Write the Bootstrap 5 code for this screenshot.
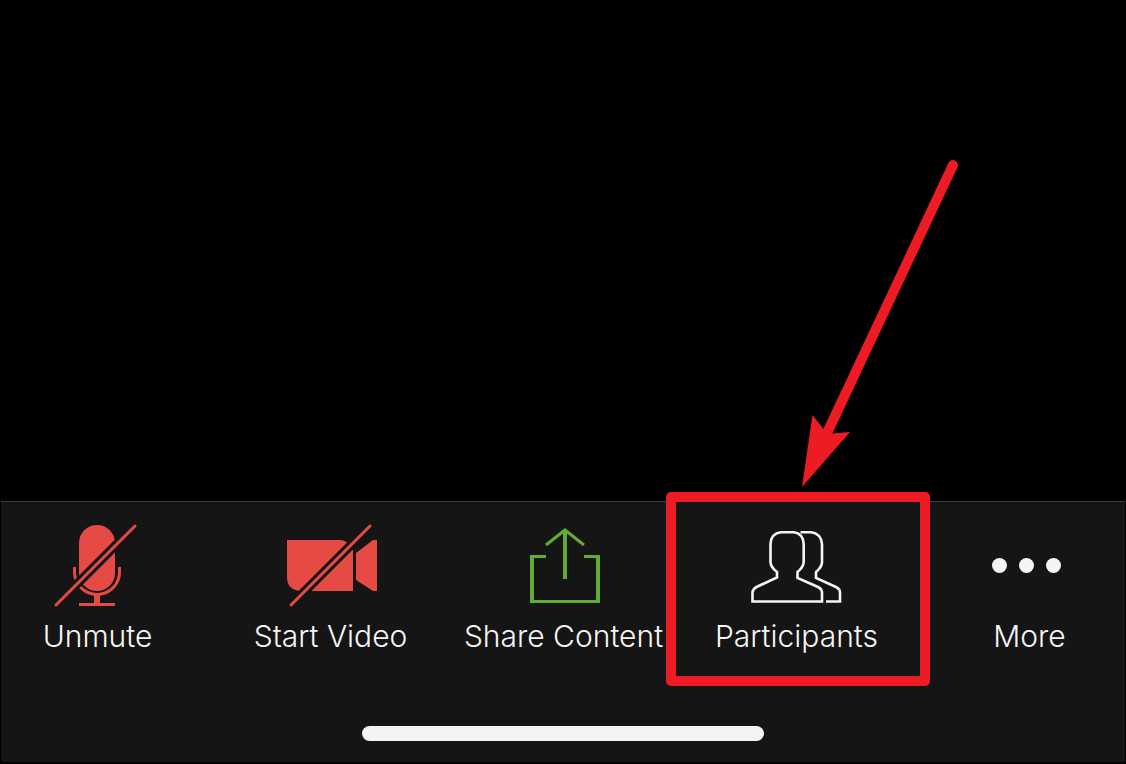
<!DOCTYPE html>
<html lang="en">
<head>
<meta charset="utf-8">
<meta name="viewport" content="width=device-width, initial-scale=1">
<title>Meeting controls</title>
<link href="https://cdn.jsdelivr.net/npm/bootstrap@5.3.0/dist/css/bootstrap.min.css" rel="stylesheet">
<style>
  body { background: #000; font-family: Inter, "Liberation Sans", sans-serif; overflow: hidden; }
  .meeting { padding: 0 1px 2px; }
  .toolbar { background: #151515; border-top: 1px solid #3c3c3c; padding: 18px 0 21px; }
  .controls { margin: 0 -21px 0 -20px; }
  .control { border: 0; background: none; color: #f5f5f5; padding: 0; font-size: 30px; font-weight: 300; line-height: 36px; white-space: nowrap; }
  .control svg { width: 96px; height: 90px; margin-bottom: 8px; }
  .off { color: #e54b44; }
  .share { color: #62ac30; }
  .cut { stroke: #151515; stroke-width: 9; }
  .highlight { border: 10px solid #ed1c24; border-radius: 5px; width: 264px; height: 194px; top: -28px; left: 50%; margin-left: -131px; pointer-events: none; }
  .pointer { bottom: 100%; left: 50%; margin-bottom: 18px; width: 170px; height: 352px; pointer-events: none; }
  .home-bar { width: 402px; height: 15px; background: #f4f4f4; margin-top: 72px; }
</style>
</head>
<body>
<div class="meeting d-flex flex-column min-vh-100">
  <main class="flex-grow-1"></main>
  <footer class="toolbar">
    <nav class="controls d-flex" aria-label="Meeting controls">
      <div class="col text-center">
        <button type="button" class="control d-inline-flex flex-column align-items-center">
          <svg class="off" viewBox="1 0 96 90" fill="none" stroke="currentColor" stroke-width="3" aria-hidden="true">
            <rect x="31" y="5" width="36" height="66" rx="18" fill="currentColor" stroke="none"/>
            <path d="M26.500 47V52A22.500 22.500 0 0 0 71.500 52V47"/>
            <path d="M46 75h6v8h15v3H31v-3h15z" fill="currentColor" stroke="none"/>
            <path class="cut" d="M12 81 87 6"/>
            <path d="M8 85 87 6" stroke-linecap="round"/>
          </svg>
          <span>Unmute</span>
        </button>
      </div>
      <div class="col text-center">
        <button type="button" class="control d-inline-flex flex-column align-items-center">
          <svg class="off" viewBox="-1 0 96 90" fill="none" stroke="currentColor" stroke-width="3" aria-hidden="true">
            <path d="M3 20H56Q63 20 69 29V71H15Q3 69 3 57ZM72 33 89 20H93V71H89L72 60Z" fill="currentColor" stroke="none"/>
            <path class="cut" d="M7 85 86 6"/>
            <path d="M7 85 86 6" stroke-linecap="round"/>
          </svg>
          <span>Start Video</span>
        </button>
      </div>
      <div class="col text-center">
        <button type="button" class="control d-inline-flex flex-column align-items-center">
          <svg class="share" viewBox="-1 0 96 90" fill="none" stroke="currentColor" aria-hidden="true">
            <path d="M13 36.500H29M67 36.500H83M13 81.500H83" stroke-width="3"/>
            <path d="M15 35V83M81 35V83M48 10V59" stroke-width="4"/>
            <path d="M29 25 48 10 67 25" stroke-width="3"/>
          </svg>
          <span>Share Content</span>
        </button>
      </div>
      <div class="col text-center position-relative">
        <button type="button" class="control d-inline-flex flex-column align-items-center">
          <svg viewBox="-1 0 96 90" fill="none" stroke="currentColor" stroke-width="2.600" aria-hidden="true">
            <path d="M3.500 81.500V72Q4 69 7.500 67L28 57.500V52Q21.500 47 21.500 42V24Q22 13.500 32 12.300H45Q54 13.500 54.700 24V42Q54.500 47 48.500 52V58L69 67Q73 69 73 72.500V81.500Z"/>
            <path d="M51.500 12.300H62Q72 13.500 73 24V42Q73 47 67 52V58L87 67Q91 69 91 72.500V81.500H77"/>
          </svg>
          <span>Participants</span>
        </button>
        <div class="highlight position-absolute"></div>
        <svg class="pointer position-absolute" viewBox="797 150 170 352" aria-hidden="true">
          <path d="M953 165 828 431" stroke="#ed1c24" stroke-width="10" stroke-linecap="round"/>
          <path d="M802 487 812.500 415 823.500 429 832 433.500 850 432Z" fill="#ed1c24"/>
        </svg>
      </div>
      <div class="col text-center">
        <button type="button" class="control d-inline-flex flex-column align-items-center">
          <svg viewBox="2 0 96 90" fill="currentColor" aria-hidden="true">
            <circle cx="19.500" cy="45.500" r="7.500"/><circle cx="46.500" cy="45.500" r="7.500"/><circle cx="73.500" cy="45.500" r="7.500"/>
          </svg>
          <span>More</span>
        </button>
      </div>
    </nav>
    <div class="home-bar rounded-pill mx-auto"></div>
  </footer>
</div>
<script src="https://cdn.jsdelivr.net/npm/bootstrap@5.3.0/dist/js/bootstrap.bundle.min.js"></script>
</body>
</html>
